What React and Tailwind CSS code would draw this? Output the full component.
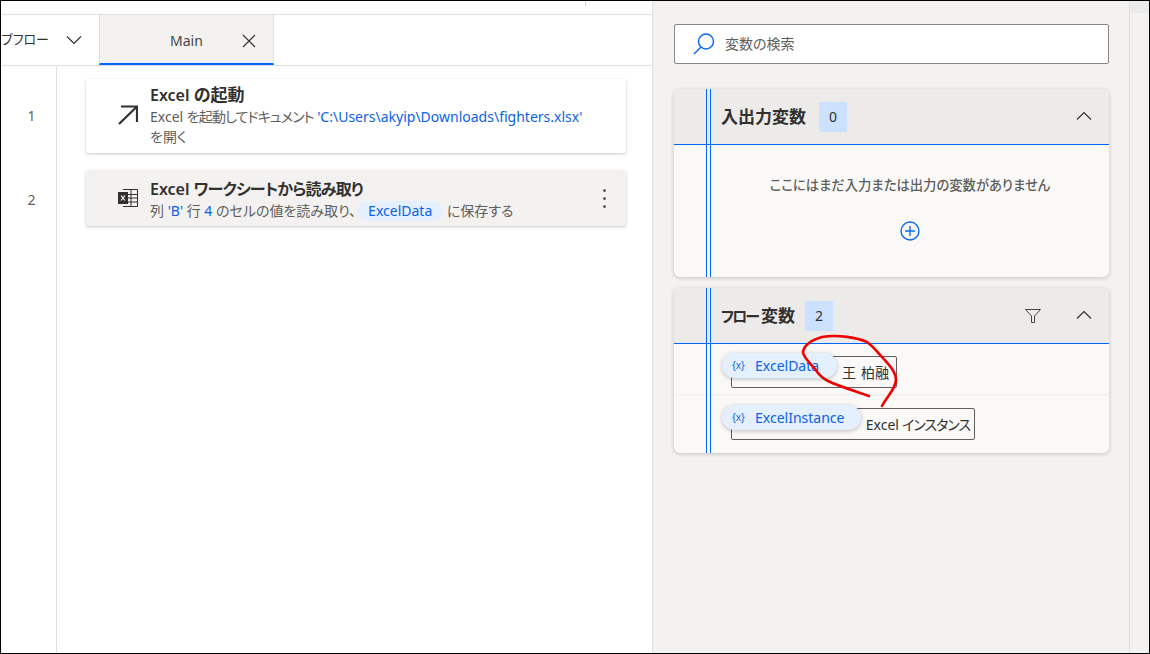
import React from 'react';

const FONT = '"Noto Sans", "Noto Sans CJK JP", sans-serif';

const Chevron = ({ up, className = '' }) => (
  <svg width="16" height="10" viewBox="0 0 16 10" fill="none" stroke="#323130" strokeWidth="1.2" className={`${up ? '' : 'rotate-180'} ${className}`}>
    <path d="M1 8.5 L8 1.5 L15 8.5" />
  </svg>
);

const Pill = ({ name, className }) => (
  <div className={`absolute left-[48px] top-[9px] flex h-[25px] items-center rounded-full bg-[#e5f0ff] pl-[10px] text-[14px] text-[#0b62e6] shadow-[0_1px_4px_rgba(0,0,0,0.25)] ${className}`}>
    <span className="w-[23px] text-[10px] text-[#0b62e6]">{'{x}'}</span>
    <span>{name}</span>
  </div>
);

const VarRow = ({ pill, pillWidth, value, boxWidth, border }) => (
  <div className={`relative h-[52px] pt-[12px] ${border ? 'border-b-2 border-[#f3f2f1]' : ''}`}>
    <div className="ml-[57px] flex h-[32px] items-center justify-end rounded-[2px] border border-[#605e5c] pr-[4px] text-[14px] text-[#323130]" style={{ width: boxWidth }}>
      {value}
    </div>
    <Pill name={pill} className={pillWidth} />
  </div>
);

const Panel = ({ title, count, filter, children, className }) => (
  <div className={`relative w-[435px] overflow-hidden rounded-[6px] bg-[#faf9f8] shadow-[0_1px_4px_rgba(0,0,0,0.2)] ${className}`}>
    <div className="flex h-[56px] items-center border-b border-[#0066ff] bg-[#ecebe9] pl-[47px] pr-[17px]">
      <span className="text-[17px] font-semibold text-[#323130]">{title}</span>
      <span className="ml-[10px] flex h-[30px] w-[28px] items-center justify-center bg-[#cce0ff] text-[14px] text-[#323130]">{count}</span>
      <div className="flex-1" />
      {filter && (
        <svg width="16" height="14" viewBox="0 0 16 14" fill="none" stroke="#444" strokeWidth="1" className="mr-[35px]">
          <path d="M0.5 0.5 H15.5 L9.5 7 V13.5 H6.5 V7 Z" />
        </svg>
      )}
      <Chevron up className="mb-[2px]" />
    </div>
    {children}
    {/* the two blue guide lines run over the whole panel */}
    <div className="absolute bottom-0 left-[32px] top-0 flex w-[5px] justify-between">
      <div className="w-px bg-[#0066ff]" />
      <div className="w-px bg-[#0066ff]" />
    </div>
  </div>
);

const Card = ({ icon, title, selected, children, menu, className, textTop }) => (
  <div className={`flex w-[540px] rounded-[2px] shadow-[0_1px_3px_rgba(0,0,0,0.22)] ${selected ? 'bg-[#f3f2f1]' : 'bg-white'} ${className}`}>
    <div className="flex w-[64px] shrink-0 items-center justify-center pl-[19px]">{icon}</div>
    <div className={`flex-1 ${textTop}`}>
      <div className="text-[16px] font-semibold leading-[22px] text-[#323130]">{title}</div>
      <div className="mt-[1px] whitespace-nowrap text-[14px] leading-[20px] text-[#605e5c]">{children}</div>
    </div>
    {menu && (
      <div className="flex w-[44px] flex-col items-center justify-center gap-[5px]">
        <span className="h-[3px] w-[3px] rounded-full bg-[#605e5c]" />
        <span className="h-[3px] w-[3px] rounded-full bg-[#605e5c]" />
        <span className="h-[3px] w-[3px] rounded-full bg-[#605e5c]" />
      </div>
    )}
  </div>
);

export default function App() {
  return (
    <div className='relative flex h-[654px] w-[1150px] overflow-hidden border border-black bg-white [font-feature-settings:"palt"]' style={{ fontFamily: FONT }}>
      {/* flow editor */}
      <div className="flex w-[652px] flex-col border-r border-[#e1dfdd]">
        <div className="h-[14px] border-b border-[#e1dfdd]">
          <div className="ml-[584px] h-[5px] w-px bg-[#d0d0d0]" />
        </div>
        <div className="flex h-[51px] border-b border-[#e1dfdd]">
          <div className="flex w-[98px] items-center justify-end overflow-hidden pr-[17px]">
            <span className="shrink-0 text-[13px] text-[#323130]">サブフロー</span>
            <span className="ml-[17px]"><Chevron /></span>
          </div>
          <div className="flex w-[175px] items-center border-x border-b-2 border-x-[#e1dfdd] border-b-[#0066ff] bg-[#f3f2f1]">
            <span className="ml-[70px] pt-[3px] text-[14px] text-[#484644]">Main</span>
            <svg width="14" height="14" viewBox="0 0 14 14" stroke="#323130" strokeWidth="1.1" className="ml-[39px] mt-[4px]">
              <path d="M1 1 L13 13 M13 1 L1 13" />
            </svg>
          </div>
        </div>
        <div className="flex flex-1">
          <div className="w-[56px] shrink-0 border-r border-[#e1dfdd] pl-[6px] text-center text-[14px] text-[#605e5c]">
            <div className="mt-[39px]">1</div>
            <div className="mt-[63px]">2</div>
          </div>
          <div className="pl-[29px] pt-[13px]">
            <Card
              className="h-[74px]"
              textTop="pt-[5px]"
              icon={
                <svg width="20" height="20" viewBox="0 0 20 20" fill="none" stroke="#323130" strokeWidth="2.2" className="mb-[2px]">
                  <path d="M1 19 L19 1.5 M3 1.5 H19 V17" />
                </svg>
              }
              title={<>Excel <span className="text-[17px]">の起動</span></>}
            >
              Excel <span className="tracking-[-0.9px]">を起動してドキュメント</span> <span className="text-[#0b62e6]">'C:\Users\akyip\Downloads\fighters.xlsx'</span>
              <br />
              を開く
            </Card>
            <Card
              selected
              menu
              className="mt-[17px] h-[56px]"
              textTop="pt-[8px]"
              icon={
                <svg width="20" height="18" viewBox="0 0 20 18" fill="none">
                  <path d="M5 0.5 H19.5 V17.5 H5 M5 5.5 H19.5 M5 9 H19.5 M5 13 H19.5 M13 0.5 V17.5" stroke="#323130" />
                  <rect x="0" y="3" width="10" height="12" fill="#323130" />
                  <path d="M3 6.5 L7 11.5 M7 6.5 L3 11.5" stroke="#fff" strokeWidth="1.2" />
                </svg>
              }
              title={<>Excel <span className="tracking-[-0.8px]">ワークシートから読み取り</span></>}
            >
              列 <span className="text-[#0b62e6]">'B'</span> 行 <span className="text-[#0b62e6]">4</span> のセルの値を読み取り、
              <span className="ml-[1px] inline-block rounded-full bg-[#e5f0ff] px-[11px] text-[#0b62e6]">ExcelData</span> に保存する
            </Card>
          </div>
        </div>
      </div>

      {/* variables pane */}
      <div className="w-[477px] border-r border-[#e1dfdd] bg-[#f3f2f1] pl-[21px] pt-[23px]">
        <div className="flex h-[40px] w-[435px] items-center rounded-[2px] border border-[#8a8886] bg-white pl-[18px]">
          <svg width="22" height="22" viewBox="0 0 22 22" fill="none" stroke="#0b6cf0" strokeWidth="1.5">
            <circle cx="13" cy="8.5" r="7.5" />
            <path d="M8 14 L1 21" />
          </svg>
          <span className="mb-[1px] ml-[10px] text-[14px] text-[#605e5c]">変数の検索</span>
        </div>
        <Panel title={<span className="mr-[3px]">入出力変数</span>} count="0" className="mt-[25px] h-[188px]">
          <div className="pl-[37px] pt-[31px] text-center text-[13.33px] font-medium text-[#605e5c]">ここにはまだ入力または出力の変数がありません</div>
          <div className="mt-[25px] flex justify-center pl-[37px]">
            <svg width="20" height="20" viewBox="0 0 20 20" fill="none" stroke="#0b6cf0" strokeWidth="1.4">
              <circle cx="10" cy="10" r="9" />
              <path d="M10 5 V15 M5 10 H15" />
            </svg>
          </div>
        </Panel>
        <Panel title={<><span className="text-[15px] tracking-[-2px]">フロー</span><span className="ml-[3px]">変数</span></>} count="2" filter className="mt-[11px] h-[165px]">
          <VarRow pill="ExcelData" pillWidth="w-[115px]" value={<span className="pr-[3px]">王<span className="ml-[5px]">柏融</span></span>} boxWidth={166} border />
          <VarRow pill="ExcelInstance" pillWidth="w-[139px]" value={<>Excel <span className="ml-[3px] tracking-[-1px]">インスタンス</span></>} boxWidth={244} />
        </Panel>
      </div>

      <div className="flex-1 bg-[#f3f2f1]">
        <div className="h-[12px] bg-[#ebeaea]" />
      </div>

      {/* red pen annotation */}
      <svg width="1150" height="654" viewBox="0 0 1150 654" fill="none" className="absolute left-[-1px] top-[-1px]">
        <path
          d="M869 396 C855 391 838 386 828 381 C820 377 818 373 815 369 C810 363 803 357 803 352 C804 345 812 340 822 337 C838 334 858 338 867 342 C874 347 878 353 883 358 C890 366 896 372 896 380 C895 390 888 395 882 406"
          stroke="#f00000"
          strokeWidth="2.6"
          strokeLinecap="round"
        />
      </svg>
    </div>
  );
}
